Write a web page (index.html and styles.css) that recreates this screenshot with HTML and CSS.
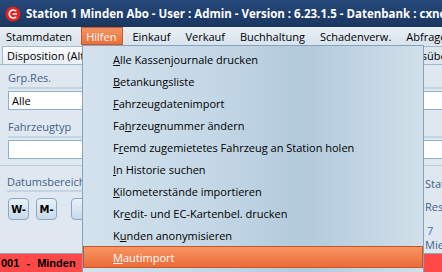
FILE: index.html
```html
<!DOCTYPE html>
<html lang="de">
<head>
    <meta charset="UTF-8">
    <title>Station 1 Minden Abo</title>
    <link rel="stylesheet" href="styles.css">
</head>
<body>
    <div class="window">
        <div class="titlebar">
            <svg class="app-icon" width="16" height="16" viewBox="0 0 16 16">
                <circle cx="8" cy="8" r="7.5" fill="#e3211d"/>
                <path d="M11.2 5.3 A4 4 0 1 0 11.2 10.7" fill="none" stroke="#fff" stroke-width="1.6"/>
                <path d="M7.6 8 H12" stroke="#fff" stroke-width="1.6"/>
            </svg>
            <span class="title">Station 1 Minden Abo - User : Admin - Version : 6.23.1.5 - Datenbank : cxnet</span>
        </div>

        <nav class="menubar">
            <span class="menu-item">Stammdaten</span>
            <span class="menu-item open">Hilfen</span>
            <span class="menu-item">Einkauf</span>
            <span class="menu-item">Verkauf</span>
            <span class="menu-item">Buchhaltung</span>
            <span class="menu-item">Schadenverw.</span>
            <span class="menu-item">Abfragen</span>
        </nav>

        <div class="workspace">
            <div class="tabs">
                <span class="tab active">Disposition (Alt+D)</span>
                <span class="tab far">Stationsübersicht</span>
            </div>

            <div class="form">
                <div class="field-label">Grp.Res.</div>
                <div class="field">Alle</div>
                <div class="field-label">Fahrzeugtyp</div>
                <div class="field"></div>
            </div>

            <div class="lower">
                <div class="dates">
                    <div class="group-title">Datumsbereich</div>
                    <div class="btn-row">
                        <button class="step-btn">W-</button>
                        <button class="step-btn">M-</button>
                        <button class="step-btn wide">Vorher</button>
                    </div>
                </div>
                <div class="info">
                    <div class="info-line">Status</div>
                    <div class="info-line">Reservierung</div>
                    <div class="info-num">7</div>
                    <div class="info-sub">Mietvertrag</div>
                </div>
            </div>
        </div>

        <div class="statusbar">001 - Minden an der Weser</div>

        <!-- geöffnetes Menü "Hilfen" -->
        <ul class="dropdown">
            <li><u>A</u>lle Kassenjournale drucken</li>
            <li><u>B</u>etankungsliste</li>
            <li><u>F</u>ahrzeugdatenimport</li>
            <li>Fa<u>h</u>rzeugnummer ändern</li>
            <li>F<u>r</u>emd zugemietetes Fahrzeug an Station holen</li>
            <li><u>I</u>n Historie suchen</li>
            <li><u>K</u>ilometerstände importieren</li>
            <li>Kr<u>e</u>dit- und EC-Kartenbel. drucken</li>
            <li>K<u>u</u>nden anonymisieren</li>
            <li class="active"><u>M</u>autimport</li>
        </ul>
    </div>
</body>
</html>
```

FILE: styles.css
```css
* {
    margin: 0;
    padding: 0;
    box-sizing: border-box;
}

body {
    width: 442px;
    height: 272px;
    overflow: hidden;
    font-family: "Open Sans", "Noto Sans", sans-serif;
    font-size: 11px;
    background: #dfe8f0;
}

.window {
    position: relative;
    height: 272px;
    display: flex;
    flex-direction: column;
    overflow: hidden;
}

.titlebar {
    height: 27px;
    flex: none;
    display: flex;
    align-items: center;
    gap: 5px;
    padding-left: 5px;
    background: linear-gradient(#27497a, #19365f);
    color: #fff;
    font-weight: 700;
    font-size: 11.5px;
    white-space: nowrap;
    overflow: hidden;
}

.app-icon {
    flex: none;
}

.menubar {
    height: 18px;
    flex: none;
    display: flex;
    align-items: stretch;
    gap: 3px;
    background: linear-gradient(#e9eff6, #d8e3ee);
    white-space: nowrap;
    color: #000;
    overflow: hidden;
}

.menu-item {
    display: flex;
    align-items: center;
    padding: 0 5px;
    border: 1px solid transparent;
}

.menu-item.open {
    padding: 0 6px 0 4px;
    background: linear-gradient(#f69462, #ec6d3a);
    border-color: #c75a2c;
    color: #fff;
}

.workspace {
    flex: 1;
    min-height: 0;
    display: flex;
    flex-direction: column;
    overflow: hidden;
}

.tabs {
    height: 20px;
    flex: none;
    display: flex;
    align-items: flex-end;
    padding-left: 2px;
    border-bottom: 1px solid #a4b8cc;
    white-space: nowrap;
}

.tab {
    height: 18px;
    padding: 0 6px 0 4px;
    display: flex;
    align-items: center;
    background: linear-gradient(#fbfcfe, #e9eff5);
    border: 1px solid #a4b8cc;
    border-bottom: none;
}

.tab.far {
    margin-left: 272px;
    background: #dde6ef;
}

.form {
    padding: 2px 0 0 8px;
    flex: none;
}

.field-label {
    height: 22px;
    display: flex;
    align-items: center;
    color: #3f6189;
    border-bottom: 2px solid #c6d3e0;
}

.field {
    height: 19px;
    margin: 2px 0 6px;
    padding-left: 3px;
    display: flex;
    align-items: center;
    background: #fff;
    border: 1px solid #8eb0cd;
    border-right: none;
}

.lower {
    flex: 1;
    display: grid;
    grid-template-columns: 424px 1fr;
    border-top: 1px solid #bfcddb;
}

.dates {
    padding: 8px 0 0 7px;
}

.group-title {
    width: 90px;
    padding-bottom: 1px;
    border-bottom: 2px solid #c5d4e3;
    color: #3f6189;
}

.btn-row {
    display: flex;
    gap: 7px;
    margin-top: 6px;
    padding-left: 1px;
}

.step-btn {
    width: 21px;
    height: 22px;
    border: 1px solid #8aa6c2;
    border-radius: 4px;
    background: linear-gradient(#e9f1f8, #c7d9ea);
    font-family: "DejaVu Sans", sans-serif;
    font-weight: 700;
    font-size: 10px;
    color: #000;
}

.step-btn.wide {
    width: 60px;
    margin-left: 7px;
}

.info {
    padding: 10px 0 0 1px;
    color: #3f6189;
    white-space: nowrap;
}

.info-line {
    height: 23px;
}

.info-num {
    margin-top: 2px;
    color: #3f73b8;
    padding-left: 2px;
    line-height: 14px;
}

.info-sub {
    line-height: 13px;
}

.statusbar {
    height: 19px;
    flex: none;
    display: flex;
    align-items: center;
    padding-left: 1px;
    background: #ff4848;
    border-top: 1px solid #9aa2aa;
    font-family: "Liberation Sans", sans-serif;
    font-weight: 700;
    font-size: 11px;
    word-spacing: 4px;
    white-space: nowrap;
}

.dropdown {
    position: absolute;
    top: 45px;
    left: 82px;
    width: 342px;
    height: 240px;
    list-style: none;
    padding: 2px 0 0;
    background: linear-gradient(90deg, #d3e2ed 0%, #c5d8e7 35%, #b3cadc 65%, #c3d6e4 85%, #d1e0ea 100%);
    border: 1px solid #87a2bd;
}

.dropdown li {
    height: 22px;
    display: flex;
    align-items: center;
    padding-left: 30px;
    color: #000;
    white-space: nowrap;
}

.dropdown li.active {
    background: linear-gradient(#f89563, #ec6c39);
    border: 1px solid #c4562a;
    padding-left: 29px;
    color: #fff;
}
```
